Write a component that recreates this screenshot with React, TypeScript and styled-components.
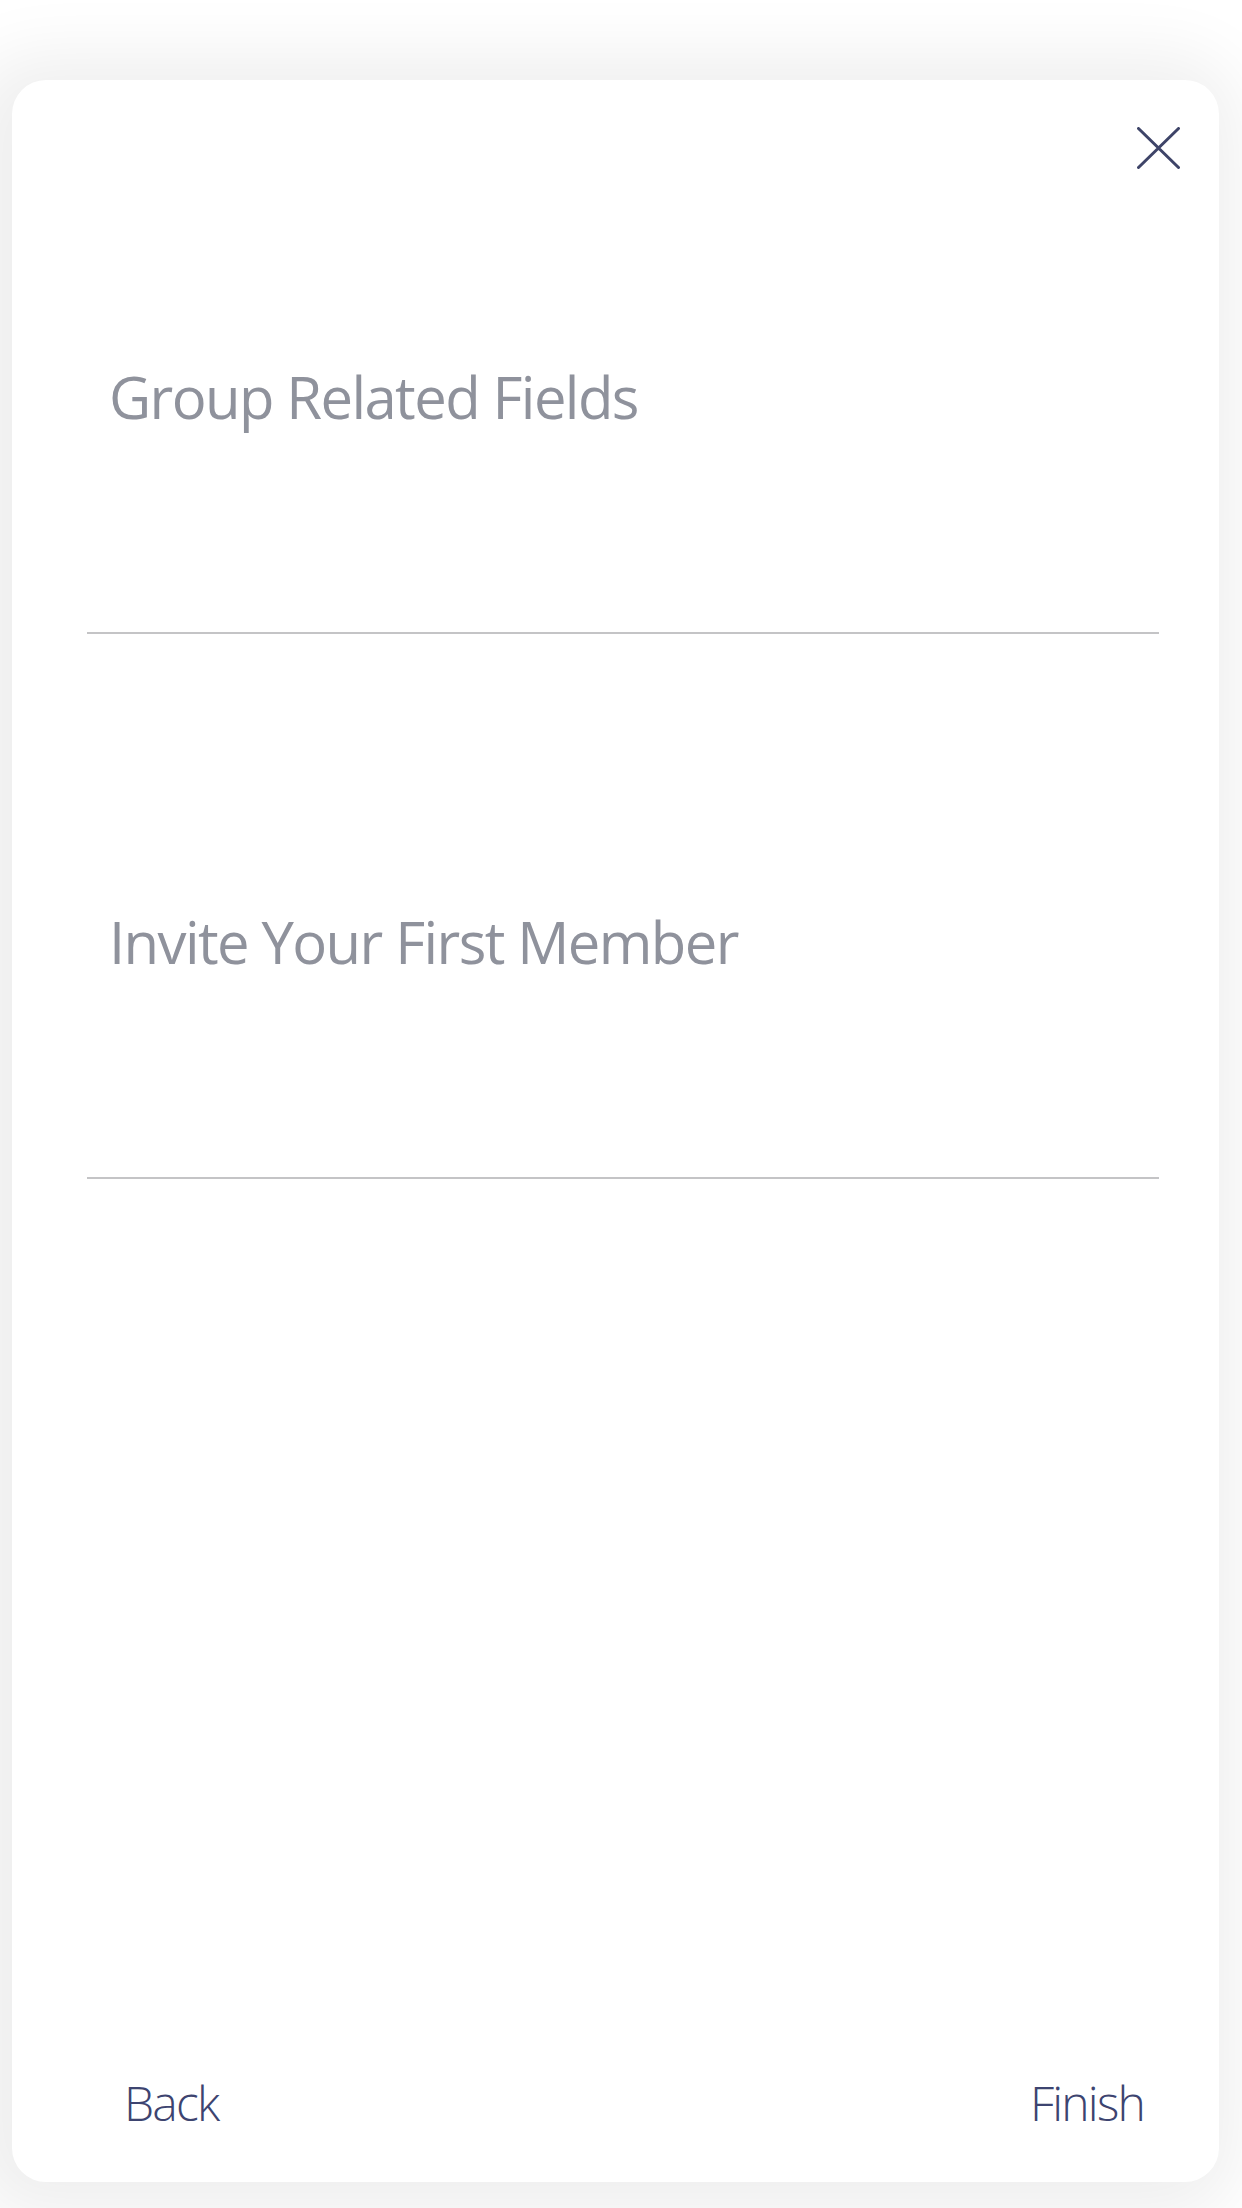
import React from "react";
import styled, { createGlobalStyle } from "styled-components";

const GlobalStyle = createGlobalStyle`
  html, body {
    margin: 0;
    padding: 0;
    background: #ffffff;
  }
  body {
    font-family: "Open Sans", "Noto Sans", Arial, sans-serif;
    -webkit-font-smoothing: antialiased;
  }
  * { box-sizing: border-box; }
`;

const Page = styled.div`
  width: 1242px;
  min-height: 2208px;
  padding: 80px 23px 26px 12px;
  overflow: hidden;
`;

const Card = styled.section`
  width: 1207px;
  height: 2102px;
  background: #ffffff;
  border-radius: 34px;
  box-shadow: -12px 6px 70px 30px rgba(0, 0, 0, 0.067);
  display: flex;
  flex-direction: column;
`;

const Header = styled.header`
  display: flex;
  justify-content: flex-end;
  padding: 47px 39px 0 0;
`;

const CloseButton = styled.button`
  width: 43px;
  height: 42px;
  padding: 0;
  border: none;
  background: transparent;
  cursor: pointer;
  display: block;
  svg { display: block; }
`;

const Form = styled.div`
  display: flex;
  flex-direction: column;
  gap: 268px;
  padding: 188px 60px 0 75px;
`;

const Field = styled.div`
  display: flex;
  flex-direction: column;
`;

const Label = styled.label`
  font-family: "Open Sans", "Noto Sans", Arial, sans-serif;
  font-weight: 400;
  font-size: 58px;
  line-height: 80px;
  letter-spacing: -1.6px;
  color: #8f929c;
  padding-left: 22px;
  white-space: nowrap;
`;

const InputArea = styled.div`
  height: 197px;
  border-bottom: 2px solid #c4c4c6;
`;

const Footer = styled.footer`
  margin-top: auto;
  display: flex;
  justify-content: space-between;
  align-items: flex-end;
  padding: 0 75px 44px 112px;
`;

const NavButton = styled.button`
  font-family: "Open Sans", "Noto Sans", Arial, sans-serif;
  font-weight: 300;
  font-size: 48px;
  line-height: 70px;
  letter-spacing: -1.8px;
  color: #3d4470;
  background: transparent;
  border: none;
  padding: 0;
  cursor: pointer;
`;

export default function App() {
  return (
    <>
      <GlobalStyle />
      <Page>
        <Card>
          <Header>
            <CloseButton aria-label="Close">
              <svg width="43" height="42" viewBox="0 0 43 42" fill="none">
                <path
                  d="M1.5 1.5 L41.5 40.5 M41.5 1.5 L1.5 40.5"
                  stroke="#3e4468"
                  strokeWidth="3"
                  strokeLinecap="round"
                />
              </svg>
            </CloseButton>
          </Header>
          <Form>
            <Field>
              <Label>Group Related Fields</Label>
              <InputArea />
            </Field>
            <Field>
              <Label>Invite Your First Member</Label>
              <InputArea />
            </Field>
          </Form>
          <Footer>
            <NavButton>Back</NavButton>
            <NavButton>Finish</NavButton>
          </Footer>
        </Card>
      </Page>
    </>
  );
}
